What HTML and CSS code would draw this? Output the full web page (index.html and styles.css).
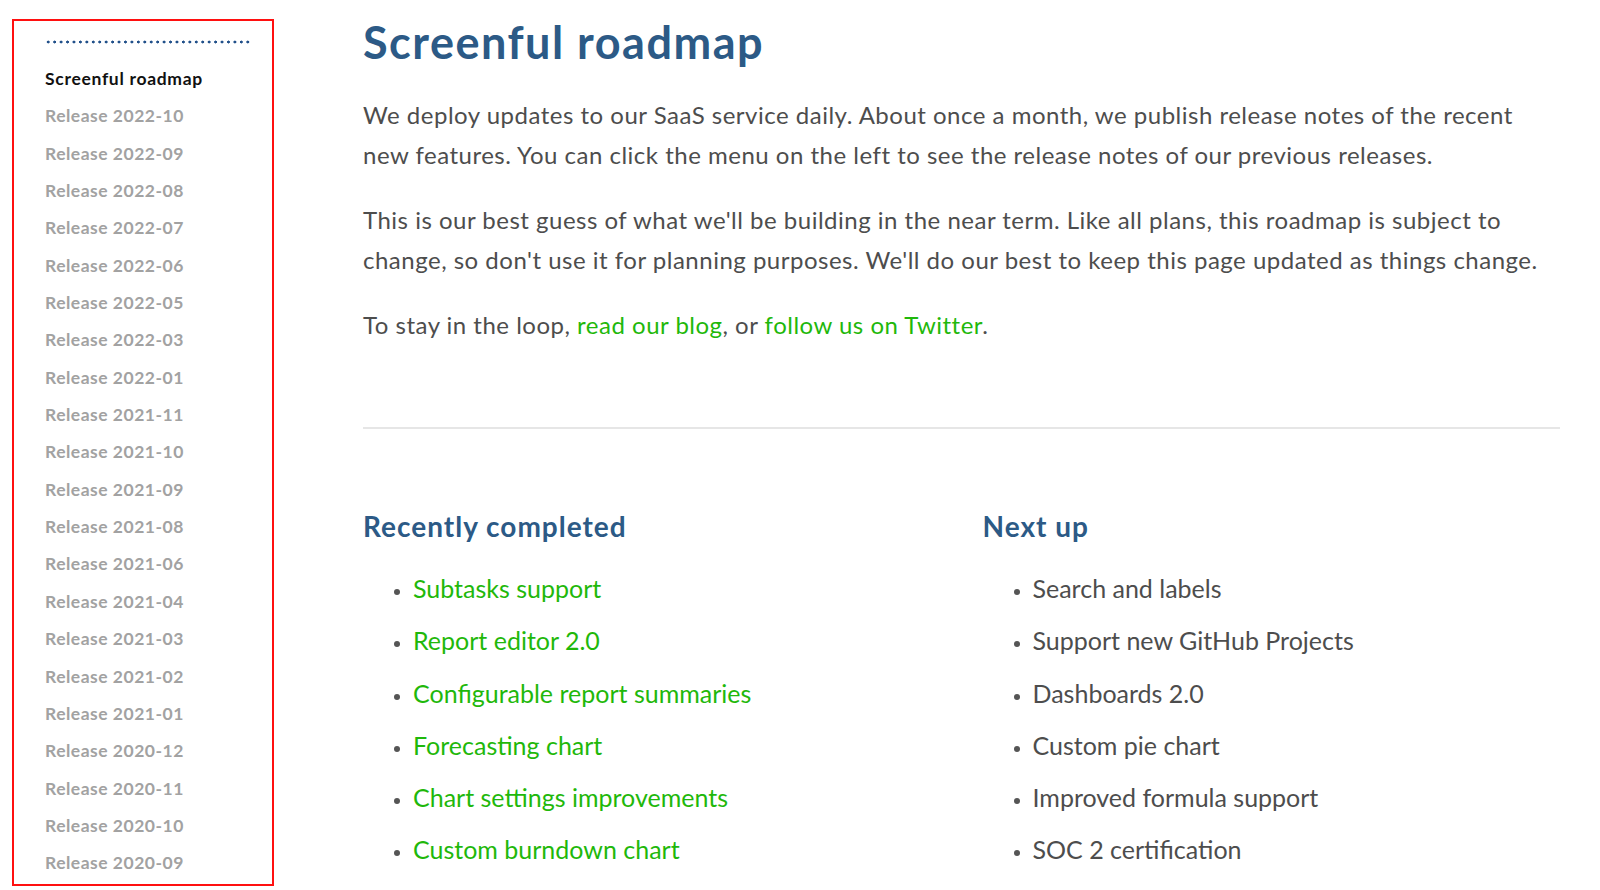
FILE: index.html
```html
<!DOCTYPE html>
<html lang="en">
<head>
<meta charset="utf-8">
<title>Screenful roadmap</title>
<link rel="stylesheet" href="styles.css">
</head>
<body>
<div class="page">
  <aside class="sidebar">
    <div class="dots"></div>
    <nav class="menu">
      <a class="menu-item active" href="#">Screenful roadmap</a>
      <a class="menu-item" href="#">Release 2022-10</a>
      <a class="menu-item" href="#">Release 2022-09</a>
      <a class="menu-item" href="#">Release 2022-08</a>
      <a class="menu-item" href="#">Release 2022-07</a>
      <a class="menu-item" href="#">Release 2022-06</a>
      <a class="menu-item" href="#">Release 2022-05</a>
      <a class="menu-item" href="#">Release 2022-03</a>
      <a class="menu-item" href="#">Release 2022-01</a>
      <a class="menu-item" href="#">Release 2021-11</a>
      <a class="menu-item" href="#">Release 2021-10</a>
      <a class="menu-item" href="#">Release 2021-09</a>
      <a class="menu-item" href="#">Release 2021-08</a>
      <a class="menu-item" href="#">Release 2021-06</a>
      <a class="menu-item" href="#">Release 2021-04</a>
      <a class="menu-item" href="#">Release 2021-03</a>
      <a class="menu-item" href="#">Release 2021-02</a>
      <a class="menu-item" href="#">Release 2021-01</a>
      <a class="menu-item" href="#">Release 2020-12</a>
      <a class="menu-item" href="#">Release 2020-11</a>
      <a class="menu-item" href="#">Release 2020-10</a>
      <a class="menu-item" href="#">Release 2020-09</a>
    </nav>
  </aside>
  <main class="content">
    <h1 class="title">Screenful roadmap</h1>
    <p class="text">We deploy updates to our SaaS service daily. About once a month, we publish release notes of the recent new features. You can click the menu on the left to see the release notes of our previous releases.</p>
    <p class="text">This is our best guess of what we'll be building in the near term. Like all plans, this roadmap is subject to change, so don't use it for planning purposes. We'll do our best to keep this page updated as things change.</p>
    <p class="text">To stay in the loop, <a class="link" href="#">read our blog</a>, or <a class="link" href="#">follow us on Twitter</a>.</p>
    <hr class="divider">
    <div class="columns">
      <section class="col">
        <h2 class="col-title">Recently completed</h2>
        <ul class="list">
          <li><a class="link" href="#">Subtasks support</a></li>
          <li><a class="link" href="#">Report editor 2.0</a></li>
          <li><a class="link" href="#">Configurable report summaries</a></li>
          <li><a class="link" href="#">Forecasting chart</a></li>
          <li><a class="link" href="#">Chart settings improvements</a></li>
          <li><a class="link" href="#">Custom burndown chart</a></li>
        </ul>
      </section>
      <section class="col">
        <h2 class="col-title">Next up</h2>
        <ul class="list">
          <li>Search and labels</li>
          <li>Support new GitHub Projects</li>
          <li>Dashboards 2.0</li>
          <li>Custom pie chart</li>
          <li>Improved formula support</li>
          <li>SOC 2 certification</li>
        </ul>
      </section>
    </div>
  </main>
</div>
</body>
</html>
```

FILE: styles.css
```css
* { box-sizing: border-box; }
html, body {
  margin: 0;
  padding: 0;
  background: #fff;
  height: 890px;
  overflow: hidden;
}
body {
  font-family: "Lato", "Open Sans", sans-serif;
  color: #4a4a4a;
}
.page {
  display: flex;
  align-items: flex-start;
  padding: 0 40px 0 12px;
  gap: 89px;
}
.sidebar {
  flex: 0 0 262px;
  height: 867px;
  margin-top: 19px;
  border: 2px solid #ff1010;
  padding: 19px 0 0 31px;
}
.dots {
  width: 206px;
  height: 4px;
  background-image: radial-gradient(circle, #21508a 1.3px, transparent 1.7px);
  background-size: 6.45px 4px;
  background-position: 0 0;
}
.menu {
  display: flex;
  flex-direction: column;
  margin-top: 16px;
}
.menu-item {
  display: block;
  font-size: 17.5px;
  font-weight: 700;
  letter-spacing: 0.5px;
  line-height: 37.35px;
  color: #a2a2a2;
  text-decoration: none;
  white-space: nowrap;
}
.menu-item.active {
  color: #111;
  letter-spacing: 0.7px;
}
.content {
  flex: 1 1 auto;
  min-width: 0;
}
.title {
  margin: 14px 0 0;
  font-size: 45px;
  line-height: 56px;
  font-weight: 700;
  letter-spacing: 1.5px;
  color: #2c5a86;
}
.text {
  max-width: 1185px;
  margin: 25px 0 0;
  font-size: 24px;
  letter-spacing: 0.5px;
  line-height: 40px;
  color: #4d4d4d;
}
.link {
  color: #1fb80b;
  text-decoration: none;
}
.divider {
  margin: 82px 0 0;
  border: 0;
  border-top: 2px solid #e6e6e6;
  height: 0;
}
.columns {
  display: grid;
  grid-template-columns: 1fr 1fr;
  column-gap: 42px;
  margin-top: 80px;
}
.col-title {
  margin: 0;
  font-size: 28px;
  line-height: 34px;
  font-weight: 700;
  letter-spacing: 1px;
  color: #2c5a86;
}
.list {
  margin: 19px 0 0;
  padding: 0 0 0 50px;
  font-size: 25px;
  line-height: 52.3px;
  color: #4d4d4d;
}
.list li::marker {
  color: #555;
  font-size: 19px;
}
```
